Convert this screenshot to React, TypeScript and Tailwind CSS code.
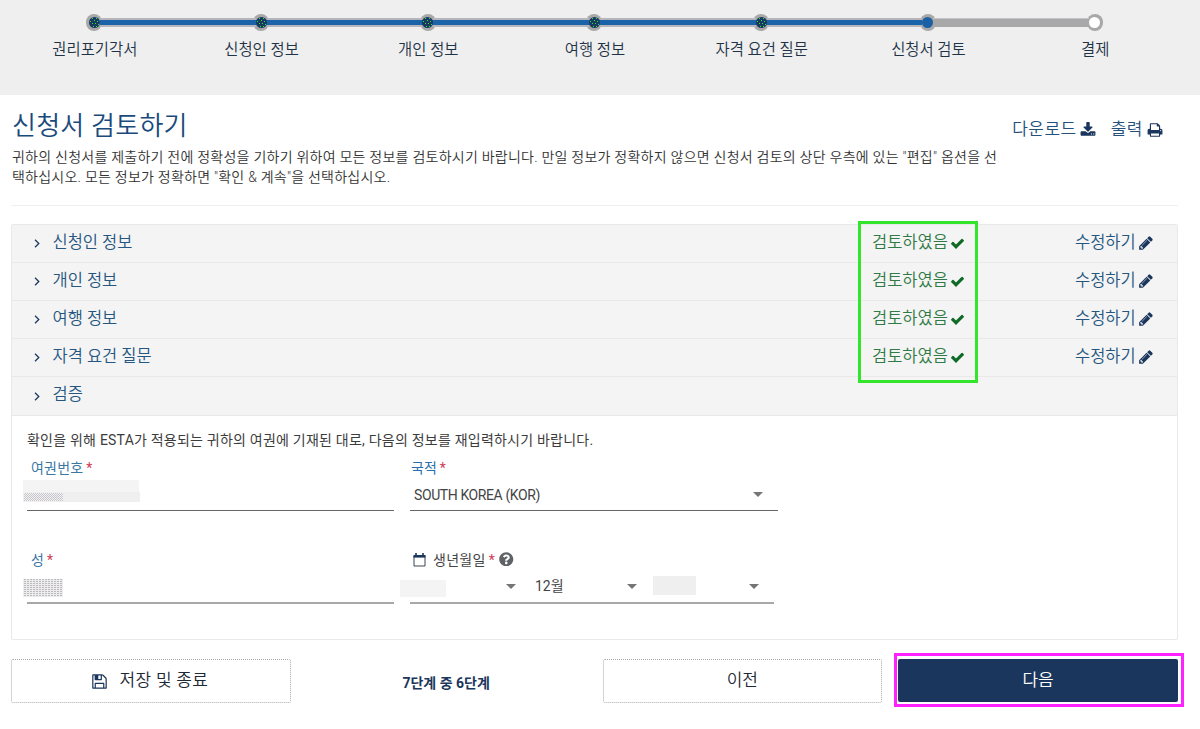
import React from "react";
import clsx from "clsx";
import { FaQuestionCircle } from "react-icons/fa";

const steps = [
  { label: "권리포기각서", state: "done" },
  { label: "신청인 정보", state: "done" },
  { label: "개인 정보", state: "done" },
  { label: "여행 정보", state: "done" },
  { label: "자격 요건 질문", state: "done" },
  { label: "신청서 검토", state: "current" },
  { label: "결제", state: "todo" },
];

const sections = ["신청인 정보", "개인 정보", "여행 정보", "자격 요건 질문"];

const paths = {
  check:
    "M1671 566q0 40-28 68l-724 724-136 136q-28 28-68 28t-68-28l-136-136-362-362q-28-28-28-68t28-68l136-136q28-28 68-28t68 28l294 295 656-657q28-28 68-28t68 28l136 136q28 28 28 68z",
  pencil:
    "M491 1536l91-91-235-235-91 91v107h128v128h107zm523-928q0-22-22-22-10 0-17 7l-542 542q-7 7-7 17 0 22 22 22 10 0 17-7l542-542q7-7 7-17zm-54-192l416 416-832 832h-416v-416zm683 96q0 53-37 90l-166 166-416-416 166-165q36-38 90-38 53 0 91 38l235 234q37 39 37 91z",
  download:
    "M1344 1344q0-26-19-45t-45-19-45 19-19 45 19 45 45 19 45-19 19-45zm256 0q0-26-19-45t-45-19-45 19-19 45 19 45 45 19 45-19 19-45zm128-224v320q0 40-28 68t-68 28h-1472q-40 0-68-28t-28-68v-320q0-40 28-68t68-28h465l135 136q58 56 136 56t136-56l136-136h464q40 0 68 28t28 68zm-325-569q17 41-14 70l-448 448q-18 19-45 19t-45-19l-448-448q-31-29-14-70 17-39 59-39h256v-448q0-26 19-45t45-19h256q26 0 45 19t19 45v448h256q42 0 59 39z",
  print:
    "M448 1536h896v-256h-896v256zm0-640h896v-384h-160q-40 0-68-28t-28-68v-160h-640v640zm1152 64q0-26-19-45t-45-19-45 19-19 45 19 45 45 19 45-19 19-45zm128 0v416q0 13-9.5 22.5t-22.5 9.5h-224v160q0 40-28 68t-68 28h-960q-40 0-68-28t-28-68v-160h-224q-13 0-22.5-9.5t-9.5-22.5v-416q0-79 56.5-135.5t135.5-56.5h64v-544q0-40 28-68t68-28h672q40 0 88 20t76 48l152 152q28 28 48 76t20 88v256h64q79 0 135.5 56.5t56.5 135.5z",
  save: "M512 1536h768v-384h-768v384zm896 0h128v-896q0-14-10-38.5t-20-34.5l-281-281q-10-10-34-20t-39-10v416q0 40-28 68t-68 28h-576q-40 0-68-28t-28-68v-416h-128v1280h128v-416q0-40 28-68t68-28h832q40 0 68 28t28 68v416zm-384-928v-320q0-13-9.5-22.5t-22.5-9.5h-192q-13 0-22.5 9.5t-9.5 22.5v320q0 13 9.5 22.5t22.5 9.5h192q13 0 22.5-9.5t9.5-22.5zm640 32v928q0 40-28 68t-68 28h-1344q-40 0-68-28t-28-68v-1344q0-40 28-68t68-28h928q40 0 88 20t76 48l280 280q28 28 48 76t20 88z",
};

const Icon = ({ name, className }: { name: keyof typeof paths; className?: string }) => (
  <svg viewBox="0 0 1792 1792" fill="currentColor" className={clsx("shrink-0", className)}>
    <path d={paths[name]} />
  </svg>
);

const Chevron = () => (
  <svg viewBox="0 0 6 10" className="h-[9px] w-[6px] shrink-0" fill="none" stroke="#1b365d" strokeWidth="1.4">
    <path d="M0.8 0.8 L5 5 L0.8 9.2" />
  </svg>
);

const Caret = () => (
  <svg viewBox="0 0 10 5" className="h-[5px] w-[10px] shrink-0" fill="#757575">
    <path d="M0 0h10L5 5z" />
  </svg>
);

const Calendar = () => (
  <svg viewBox="0 0 13 14" className="h-[14px] w-[13px] shrink-0" fill="none" stroke="#3a4650">
    <path d="M1 2.5h11v10.5H1z" strokeWidth="1" />
    <path d="M0.5 3.4h12" stroke="#1b365d" strokeWidth="2.4" />
    <path d="M3 0v3M10 0v3" stroke="#1b365d" strokeWidth="1.6" />
  </svg>
);

const Required = () => <span className="ml-[3px] text-[#d03a55]">*</span>;

const StepDot = ({ state }: { state: string }) => (
  <svg viewBox="0 0 11 11" className="z-10 col-start-1 row-start-1 h-[11px] w-[11px]" shapeRendering="crispEdges">
    <circle
      cx="5.5"
      cy="5.5"
      r="5.5"
      shapeRendering="auto"
      fill={state === "done" ? "#173a63" : state === "current" ? "#1b5fa5" : "#fff"}
    />
    {state === "done" && (
      <path
        d="M3 1h1v1H3zM7 1h1v1H7zM5 3h1v1H5zM1 4h1v1H1zM8 4h1v1H8zM3 6h1v1H3zM6 6h1v1H6zM9 7h1v1H9zM4 9h1v1H4zM7 9h1v1H7z"
        fill="#33e62c"
      />
    )}
  </svg>
);

const line = {
  none: "",
  blue: "border-y-[2px] border-[#b5b5bb] bg-[#1b63a8]",
  gray: "border-t border-[#c6c3cb] bg-[#a8a8a8]",
};

const Stepper = () => (
  <div className="h-[95px] bg-[#efefef] pt-[14px] pl-[11px]">
    <ol className="grid w-[1167px] grid-cols-7">
      {steps.map((step, i) => (
        <li key={step.label} className="flex flex-col items-center">
          <div className="grid w-full place-items-center">
            <span className="col-start-1 row-start-1 h-[17px] w-[16px] rounded-full bg-[#a8a8a8]" />
            <div className="z-[1] col-start-1 row-start-1 flex w-full">
              <span className={clsx("h-[9px] flex-1", i === 0 ? line.none : i < 6 ? line.blue : line.gray)} />
              <span className={clsx("w-[11px]", i > 0 && i < 5 && "my-[2px] bg-[#1b63a8]")} />
              <span className={clsx("h-[9px] flex-1", i === 6 ? line.none : i < 5 ? line.blue : line.gray)} />
            </div>
            <StepDot state={step.state} />
          </div>
          <span className="mt-[8px] pl-px text-[15.4px] leading-[22px] font-[350] whitespace-nowrap text-[#1f3347]">
            {step.label}
          </span>
        </li>
      ))}
    </ol>
  </div>
);

const Verification = () => (
  <div className="px-[15px] pt-[14px] text-[14px] leading-5">
    <p className="whitespace-nowrap text-[#3c3c3c] tracking-[0.22px]">
      확인을 위해 ESTA가 적용되는 귀하의 여권에 기재된 대로, 다음의 정보를 재입력하시기 바랍니다.
    </p>
    <div className="mt-[8px] grid grid-cols-[367px_368px] gap-x-[16px]">
      <div>
        <div className="pl-[4px] tracking-[0.2px] text-[#3a77a3]">
          여권번호
          <Required />
        </div>
        <div className="h-[33px] border-b border-[#666] pt-[2px]">
          <div className="-ml-[4px] h-[12px] w-[116px] bg-[#f4f4f4]" />
          <div className="-ml-[4px] h-[10px] w-[117px] bg-[#efefef] p-px">
            <div className="h-full w-[39px] bg-[conic-gradient(#c9c6cc_25%,#f1f1f1_0_50%,#c9c6cc_0_75%,#f1f1f1_0)] bg-[length:2px_2px]" />
          </div>
        </div>
      </div>
      <div>
        <div className="pl-px text-[#2b6fae]">
          국적
          <Required />
        </div>
        <div className="flex h-[33px] items-center justify-between border-b border-[#666] pt-[1px] pr-[15px] pl-[4px] text-[#444]">
          <span className="tracking-[-0.4px]">SOUTH KOREA (KOR)</span>
          <Caret />
        </div>
      </div>
    </div>
    <div className="mt-[39px] grid grid-cols-[367px_364px] gap-x-[16px]">
      <div>
        <div className="pl-[4px] text-[#3a77a3]">
          성
          <Required />
        </div>
        <div className="h-[34px] border-b-2 border-[#a8a8a8] pt-[9px]">
          <div className="-ml-[4px] h-[18px] w-[40px] bg-[#ededed] bg-[conic-gradient(#bdbabf_25%,#ededed_0)] bg-[length:3px_2px]" />
        </div>
      </div>
      <div>
        <div className="flex h-5 items-center pl-[3px] text-[#444]">
          <Calendar />
          <span className="ml-[7px] tracking-[0.3px]">
            생년월일
            <Required />
          </span>
          <FaQuestionCircle className="mb-[2px] ml-[4px] text-[14.5px] text-[#5e6266]" />
        </div>
        <div className="grid h-[34px] grid-cols-[125px_121px_118px] items-center border-b-2 border-[#a8a8a8] text-[#444]">
          <div className="flex items-center justify-between pr-[19px]">
            <span className="mt-[4px] -ml-[10px] h-[17px] w-[46px] bg-[#f4f4f4]" />
            <Caret />
          </div>
          <div className="flex items-center justify-between pr-[19px]">
            <span>12월</span>
            <Caret />
          </div>
          <div className="flex items-center justify-between pr-[15px]">
            <span className="mb-px -ml-[3px] h-[19px] w-[43px] bg-[#efefef]" />
            <Caret />
          </div>
        </div>
      </div>
    </div>
  </div>
);

const App = () => {
  return (
    <div className="h-[729px] w-[1200px] overflow-hidden bg-white font-['Roboto','Noto_Sans_CJK_KR',sans-serif]">
      <Stepper />

      <main className="pr-[22px] pl-[11px]">
        <header className="flex h-[111px] justify-between border-b border-[#f0f0f0] pt-[12px] pl-px">
          <div>
            <h1 className="mt-px text-[26px] leading-[36px] font-[350] tracking-[0.25px] text-[#1a4a7c]">
              신청서 검토하기
            </h1>
            <p className="mt-[3px] text-[14px] leading-[20px] font-[350] tracking-[0.245px] whitespace-nowrap text-[#333]">
              귀하의 신청서를 제출하기 전에 정확성을 기하기 위하여 모든 정보를 검토하시기 바랍니다. 만일 정보가 정확하지 않으면 신청서 검토의 상단 우측에 있는 "편집" 옵션을 선
              <br />
              택하십시오. 모든 정보가 정확하면 "확인 &amp; 계속"을 선택하십시오.
            </p>
          </div>
          <div className="flex h-[46px] items-center pr-[15px] text-[17px] font-[350] tracking-[0.5px] text-[#25507c]">
            <span>다운로드</span>
            <Icon name="download" className="ml-[3px] h-[16px] w-[16px] text-[#1b365d]" />
            <span className="ml-[15px]">출력</span>
            <Icon name="print" className="ml-[4px] h-[16px] w-[16px] text-[#1b365d]" />
          </div>
        </header>

        <section className="relative mt-[18px] h-[416px] rounded-[2px] border border-[#e9e9e9]">
          {sections.map((title) => (
            <div
              key={title}
              className="flex h-[38px] items-center border-b border-[#e9e9e9] bg-[#f4f4f4] pl-[22px] text-[#25567f]"
            >
              <Chevron />
              <span className="mb-[1px] ml-[12.5px] w-[819.5px] text-[16.5px] leading-6 font-[350]">{title}</span>
              <span className="w-[78px] text-[16.5px] font-[350] text-[#2f7a45]">검토하였음</span>
              <Icon name="check" className="h-[15px] w-[15px] text-[#0e6a24]" />
              <span className="ml-[110px] w-[63px] text-[16.5px] font-[350]">수정하기</span>
              <Icon name="pencil" className="mb-[1px] h-[16px] w-[16px] text-[#1b365d]" />
            </div>
          ))}
          <div className="flex h-[39px] items-center border-b border-[#e9e9e9] bg-[#f4f4f4] pl-[22px] text-[#25567f]">
            <Chevron />
            <span className="mb-[2px] ml-[12.5px] text-[16.5px] leading-6 font-[350]">검증</span>
          </div>
          <Verification />
          {/* reviewed highlight */}
          <div className="absolute -top-[4px] left-[846px] h-[162px] w-[120px] border-[3px] border-[#33e62c]" />
        </section>

        <footer className="mt-[19px] grid grid-cols-4 gap-4 text-[17px] font-[350] text-[#1d2936]">
          <button className="flex h-[44px] items-center justify-center rounded-[2px] border border-dotted border-[#aaa] pr-[3px] tracking-[0.3px]">
            <Icon name="save" className="mr-[12px] h-[17px] w-[17px] text-[#1b365d]" />
            저장 및 종료
          </button>
          <div className="flex h-[48px] items-center justify-center pr-px text-[14px] font-bold text-[#1b365d]">
            7단계 중 6단계
          </div>
          <button className="h-[44px] rounded-[2px] border border-dotted border-[#aaa]">이전</button>
          <div className="relative">
            <button className="h-[43px] w-full rounded-[2px] bg-[#1b365d] text-white">다음</button>
            {/* next highlight */}
            <div className="absolute -top-[6px] -left-[4px] h-[54px] w-[290px] border-[3px] border-[#ff22ff]" />
          </div>
        </footer>
      </main>
    </div>
  );
};

export default App;
